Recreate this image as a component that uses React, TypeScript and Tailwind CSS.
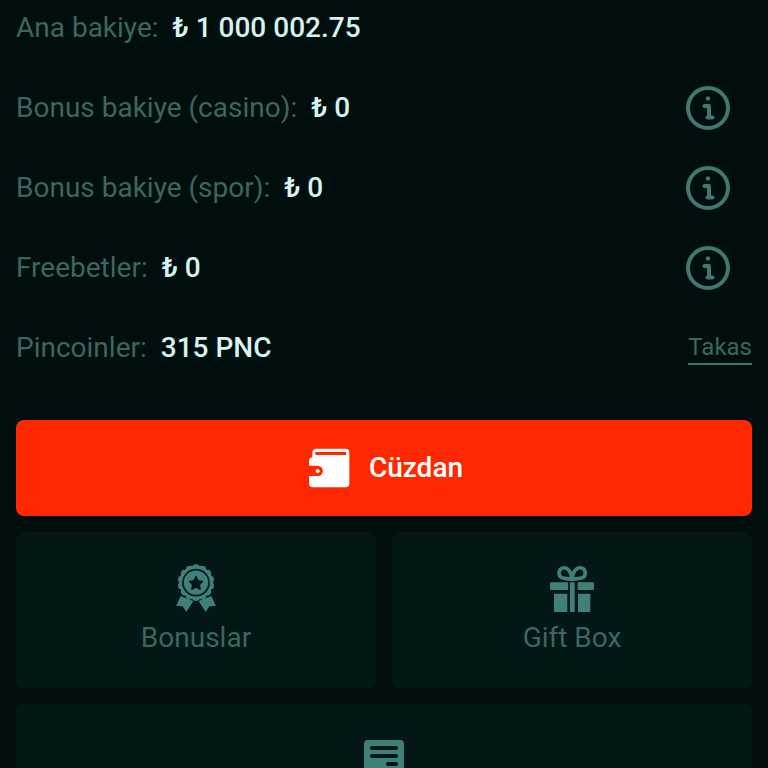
import type { ReactNode } from 'react'

interface Balance {
  label: string
  value: string
  info?: boolean
  exchange?: boolean
}

const BALANCES: Balance[] = [
  { label: 'Ana bakiye:', value: '₺ 1 000 002.75' },
  { label: 'Bonus bakiye (casino):', value: '₺ 0', info: true },
  { label: 'Bonus bakiye (spor):', value: '₺ 0', info: true },
  { label: 'Freebetler:', value: '₺ 0', info: true },
  { label: 'Pincoinler:', value: '315 PNC', exchange: true },
]

export default function App() {
  return (
    <main className="h-screen overflow-hidden bg-[#000f0e] px-4 pt-2 font-['Roboto',sans-serif] text-[28px] leading-9 text-[#3b6661]">
      <ul className="space-y-10">
        {BALANCES.map(b => (
          <li key={b.label} className="flex h-10 items-center justify-between">
            <p className="flex gap-3.5">
              <span>{b.label}</span>
              <span className="font-medium text-[#d8f3ee]">{b.value}</span>
            </p>
            {b.info && (
              <button type="button" aria-label={b.label} className="mr-5 text-[#3f7771]">
                <InfoIcon />
              </button>
            )}
            {b.exchange && (
              <a href="#takas" className="border-b-2 border-[#3f7771] text-2xl leading-8">Takas</a>
            )}
          </li>
        ))}
      </ul>

      <button type="button" className="mt-13 flex h-24 w-full items-center justify-center gap-4 rounded-lg bg-[#ff2800] font-medium text-white">
        <WalletIcon />
        Cüzdan
      </button>

      <div className="mt-4 grid grid-cols-2 gap-4">
        <Tile label="Bonuslar"><BadgeIcon /></Tile>
        <Tile label="Gift Box"><GiftIcon /></Tile>
        <Tile wide><HistoryIcon /></Tile>
      </div>
    </main>
  )
}

function Tile({ label, wide, children }: { label?: string; wide?: boolean; children: ReactNode }) {
  return (
    <button type="button" className={`flex flex-col items-center gap-2 rounded-lg bg-[#031716] py-8 ${wide ? 'col-span-2' : ''}`}>
      <span className="text-[#41807a]">{children}</span>
      {label && <span>{label}</span>}
    </button>
  )
}

function InfoIcon() {
  return (
    <svg width="48" height="48" viewBox="0 0 48 48" fill="none" stroke="currentColor" className="block">
      <circle cx="24" cy="24" r="20" strokeWidth="4" />
      <circle cx="24" cy="14.5" r="2.2" fill="currentColor" stroke="none" />
      <path d="M20.500 22H25V33.500H28.500M23.500 33.500H25" strokeWidth="4" strokeLinecap="round" strokeLinejoin="round" />
    </svg>
  )
}

function WalletIcon() {
  return (
    <svg width="48" height="48" viewBox="45 42 144 144" fill="currentColor">
      <path
        fillRule="evenodd"
        d="M79 56H166Q178 56 178 68V160Q178 172 166 172H69Q57 172 57 160V138H83A15 15 0 0 0 83 107H57V91Q57 84 67 82V68Q67 56 79 56ZM80 66Q75 66 75 70Q75 75 80 75H168V66Z"
      />
      <circle cx="83" cy="123" r="6" />
    </svg>
  )
}

// scalloped edge of the rosette, 14 lobes
const LOBES = Array.from({ length: 14 }, (_, i) => {
  const a = (i * Math.PI) / 7
  return { cx: 108 + 43 * Math.sin(a), cy: 98 - 43 * Math.cos(a) }
})

function BadgeIcon() {
  return (
    <svg width="40" height="48" viewBox="48 42 120 144" fill="currentColor" className="block">
      <path d="M62 138L48 168L68 169L79 186L100 153ZM154 138L168 168L148 169L137 186L116 153Z" />
      <circle cx="108" cy="98" r="50" />
      {LOBES.map((l, i) => <circle key={i} cx={l.cx} cy={l.cy} r="12" />)}
      <circle cx="108" cy="98" r="39" fill="none" stroke="#031716" strokeWidth="5" />
      <path
        d="M108 79L114 92L128 94L118 104L120.500 118L108 111L95.500 118L98 104L88 94L102 92Z"
        fill="#031716"
        stroke="#031716"
        strokeWidth="4"
        strokeLinejoin="round"
      />
    </svg>
  )
}

function GiftIcon() {
  return (
    <svg width="44" height="48" viewBox="45 42 132 144" fill="currentColor" className="block">
      <path
        d="M111 88C109 65 98 50 83 54C69 58 69 77 80 83C88 87 101 86 111 88ZM111 88C113 65 124 50 140 54C154 58 154 77 143 83C135 87 121 86 111 88Z"
        fill="none"
        stroke="currentColor"
        strokeWidth="11"
        strokeLinejoin="round"
      />
      <path d="M49 97H99V120H49Q45 120 45 116V101Q45 97 49 97ZM128 97H173Q177 97 177 101V116Q177 120 173 120H128ZM105 97H119V186H105ZM57 131H97V186H61Q57 186 57 182ZM129 131H166V182Q166 186 162 186H129Z" />
    </svg>
  )
}

function HistoryIcon() {
  return (
    <svg width="40" height="48" viewBox="0 0 40 48" fill="none" className="block">
      <rect y="4" width="40" height="40" rx="4" fill="currentColor" />
      <path d="M8 12h24M8 20h24M24 28h8" stroke="#031716" strokeWidth="4" strokeLinecap="round" />
    </svg>
  )
}
